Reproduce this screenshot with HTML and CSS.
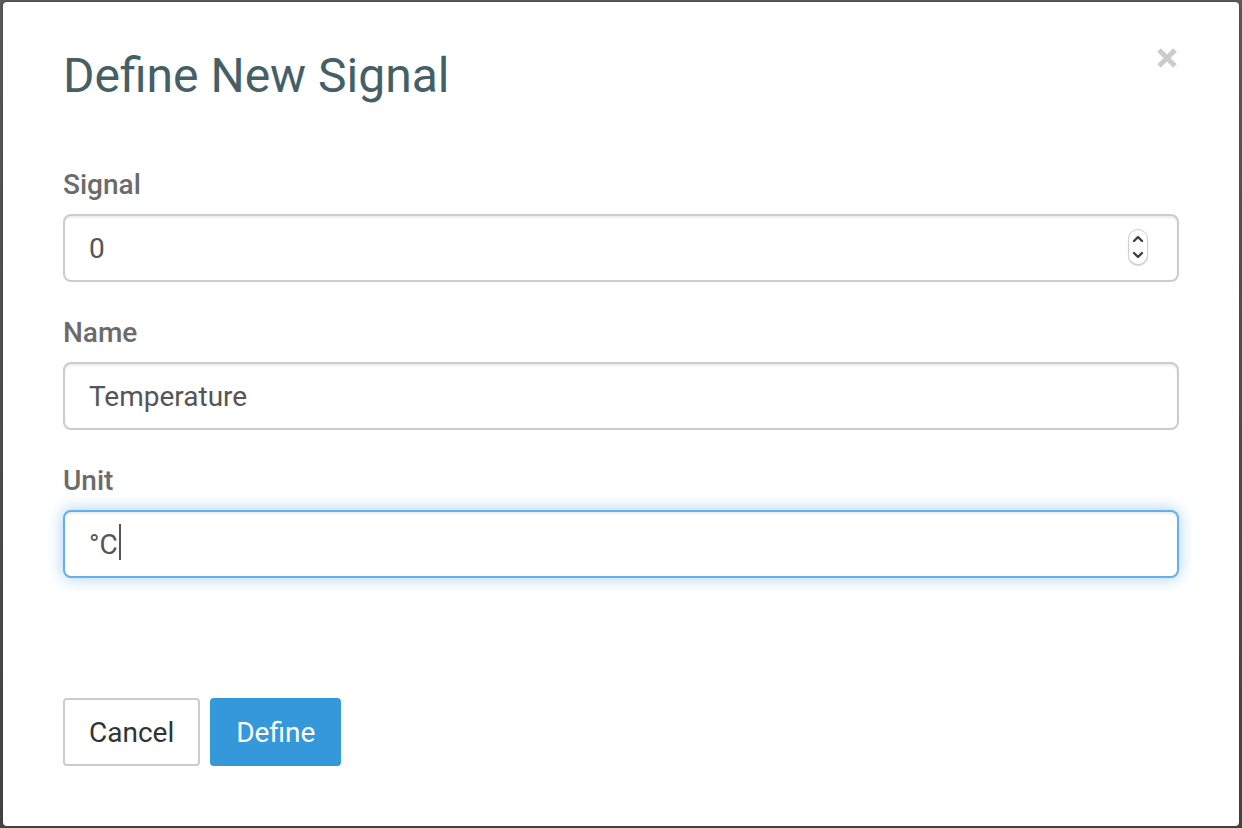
FILE: index.html
```html
<!DOCTYPE html>
<html lang="en">
<head>
<meta charset="utf-8">
<meta name="viewport" content="width=device-width, initial-scale=1">
<title>Define New Signal</title>
<link rel="stylesheet" href="styles.css">
</head>
<body class="backdrop">
<main class="modal" role="dialog" aria-labelledby="modal-title">
  <header class="modal-header">
    <h1 class="modal-title" id="modal-title">Define New Signal</h1>
    <button class="close" type="button" aria-label="Close">
      <svg class="close-icon" viewBox="0 0 20 20" aria-hidden="true"><path d="M2 2L18 18M18 2L2 18"/></svg>
    </button>
  </header>
  <form class="signal-form">
    <div class="field">
      <label class="field-label" for="signal">Signal</label>
      <div class="control">
        <input class="text-input" id="signal" type="number" value="0">
        <span class="stepper" aria-hidden="true">
          <svg class="chevron" viewBox="0 0 12 8"><path d="M2 6L6 2L10 6"/></svg>
          <svg class="chevron" viewBox="0 0 12 8"><path d="M2 2L6 6L10 2"/></svg>
        </span>
      </div>
    </div>
    <div class="field">
      <label class="field-label" for="name">Name</label>
      <div class="control">
        <input class="text-input" id="name" type="text" value="Temperature">
      </div>
    </div>
    <div class="field">
      <label class="field-label" for="unit">Unit</label>
      <div class="control">
        <input class="text-input text-input-active" id="unit" type="text" value="°C">
        <span class="caret" aria-hidden="true"></span>
      </div>
    </div>
    <footer class="actions">
      <button class="button button-default" type="button">Cancel</button>
      <button class="button button-primary" type="submit">Define</button>
    </footer>
  </form>
</main>
</body>
</html>
```
FILE: styles.css
```css
* {
  box-sizing: border-box;
}

.backdrop {
  margin: 0;
  padding: 2px 3px;
  min-height: 100vh;
  display: flex;
  background: linear-gradient(#5e5c5d, #484748);
  font-family: Roboto, "Liberation Sans", sans-serif;
  font-size: 28px;
  line-height: 40px;
  color: #555;
}

.modal {
  flex: 1;
  min-width: 0;
  padding: 46px 60px 60px;
  border-radius: 4px;
  background: #fff;
  box-shadow: 0 0 4px rgba(0, 0, 0, 0.3);
}

.modal-header {
  display: flex;
  justify-content: space-between;
  align-items: flex-start;
  margin-bottom: 61px;
}

.modal-title {
  margin: 0;
  font-size: 48px;
  line-height: 56px;
  font-weight: 400;
  color: #455f67;
}

.close {
  display: flex;
  padding: 0;
  border: 0;
  background: none;
  cursor: pointer;
}

.close-icon {
  width: 20px;
  height: 20px;
  margin-right: 2px;
  fill: none;
  stroke: #ccc;
  stroke-width: 5;
}

.field {
  display: flex;
  flex-direction: column;
  gap: 9px;
  margin-bottom: 31px;
}

.field-label {
  font-weight: 500;
  color: #6b6b6b;
}

.control {
  position: relative;
}

.text-input {
  display: block;
  width: 100%;
  height: 68px;
  padding: 0 24px;
  border: 2px solid #ccc;
  border-radius: 8px;
  background: #fff;
  box-shadow: inset 0 2px 2px rgba(0, 0, 0, 0.075);
  font: inherit;
  color: #555;
  outline: 0;
  appearance: none;
  -moz-appearance: textfield;
}

.text-input::-webkit-inner-spin-button {
  appearance: none;
  margin: 0;
}

.text-input-active,
.text-input:focus {
  border-color: #66afe9;
  box-shadow: inset 0 2px 2px rgba(0, 0, 0, 0.075), 0 0 16px rgba(102, 175, 233, 0.6);
}

.stepper {
  position: absolute;
  top: 15px;
  right: 31px;
  display: flex;
  flex-direction: column;
  justify-content: space-between;
  align-items: center;
  width: 20px;
  height: 36px;
  padding: 5px 0;
  border: 1px solid #d0d0d0;
  border-radius: 10px;
  background: #fff;
  box-shadow: 0 1px 1px rgba(0, 0, 0, 0.2);
}

.chevron {
  width: 12px;
  height: 8px;
  fill: none;
  stroke: #404040;
  stroke-width: 2.4;
  stroke-linecap: round;
  stroke-linejoin: round;
}

.caret {
  position: absolute;
  top: 14px;
  left: 56px;
  width: 2px;
  height: 36px;
  background: #555;
}

.actions {
  display: flex;
  gap: 10px;
  padding-top: 89px;
}

.button {
  height: 68px;
  padding: 2px 24px 0;
  border: 2px solid #ccc;
  border-radius: 4px;
  background: #fff;
  font: inherit;
  color: #333;
  cursor: pointer;
}

.button-primary {
  border-color: #3498db;
  background: #3498db;
  color: #fff;
}
```
